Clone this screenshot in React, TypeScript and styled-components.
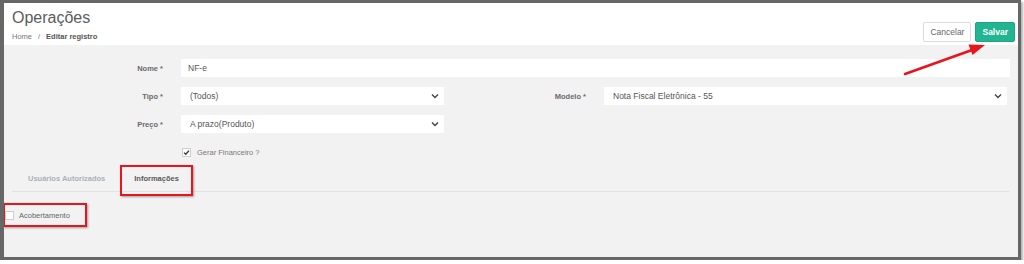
import styled, { createGlobalStyle, css } from "styled-components";

const GlobalStyle = createGlobalStyle`
  html, body {
    margin: 0;
    padding: 0;
    background: #ffffff;
  }
  body {
    font-family: "Liberation Sans", Arial, sans-serif;
  }
`;

const Frame = styled.div`
  width: 1021px;
  height: 260px;
  box-sizing: border-box;
  border-style: solid;
  border-color: #676767;
  border-width: 3px 3px 3px 4px;
  box-shadow: 2px 2px 2px rgba(0, 0, 0, 0.3);
  background: #f2f2f2;
  position: relative;
  overflow: hidden;
`;

const Header = styled.header`
  height: 42px;
  box-sizing: border-box;
  background: #ffffff;
  display: flex;
  align-items: flex-end;
  justify-content: space-between;
  padding: 6px 3px 3px 8px;
`;

const TitleBlock = styled.div`
  display: flex;
  flex-direction: column;
  align-self: stretch;
`;

const Title = styled.h1`
  margin: 0;
  font-size: 16px;
  line-height: 18px;
  font-weight: normal;
  color: #5c5c5c;
`;

const Breadcrumb = styled.div`
  margin-top: auto;
  font-size: 7.5px;
  line-height: 10px;
  color: #6d6d6d;
  display: flex;
  gap: 6px;
`;

const Crumb = styled.span<{ $active?: boolean }>`
  font-weight: ${(p) => (p.$active ? "bold" : "normal")};
  color: ${(p) => (p.$active ? "#555" : "#777")};
`;

const Actions = styled.div`
  display: flex;
  gap: 4px;
`;

const Button = styled.button<{ $primary?: boolean }>`
  height: 20px;
  box-sizing: border-box;
  border-radius: 2px;
  font-family: inherit;
  font-size: 8.5px;
  padding: 0 6px;
  cursor: pointer;
  ${(p) =>
    p.$primary
      ? css`
          background: #23b491;
          border: 1px solid #1ea583;
          color: #fff;
          font-weight: bold;
        `
      : css`
          background: #fff;
          border: 1px solid #dcdcdc;
          color: #666;
        `}
`;

const Form = styled.div`
  padding: 14px 8px 0 0;
  display: flex;
  flex-direction: column;
  gap: 10px;
`;

const Row = styled.div`
  display: flex;
  align-items: center;
`;

const Label = styled.label<{ $width: number }>`
  width: ${(p) => p.$width}px;
  flex: none;
  text-align: right;
  font-size: 7.5px;
  font-weight: bold;
  color: #6a6a6a;
  padding-right: 18px;
  box-sizing: content-box;
`;

const Input = styled.div<{ $width?: number }>`
  height: 18px;
  box-sizing: border-box;
  background: #fff;
  display: flex;
  align-items: center;
  padding-left: 7px;
  font-size: 8.5px;
  color: #555;
  ${(p) => (p.$width ? `width: ${p.$width}px; flex: none;` : "flex: 1;")}
`;

const Select = styled(Input)`
  padding: 0 5px 0 9px;
  justify-content: space-between;
`;

const CheckRow = styled.div`
  display: flex;
  align-items: center;
  gap: 6px;
  padding-left: 178px;
  margin-top: 5px;
  font-size: 7.5px;
  color: #7a7a7a;
`;

const Box = styled.span`
  width: 9px;
  height: 9px;
  box-sizing: border-box;
  border: 1px solid #cfcfcf;
  background: #fff;
  display: inline-flex;
  align-items: center;
  justify-content: center;
`;

const redBox = css`
  content: "";
  position: absolute;
  border: 2px solid #e8161c;
  box-shadow: 1px 1px 2px rgba(0, 0, 0, 0.35);
  pointer-events: none;
`;

const Tabs = styled.div`
  margin: 10px 9px 0 8px;
  display: flex;
  border-bottom: 1px solid #e2e2e2;
`;

const Tab = styled.div<{ $active?: boolean; $marked?: boolean }>`
  position: relative;
  height: 24px;
  line-height: 24px;
  padding: 0 ${(p) => (p.$marked ? "12px 0 13px" : "16px")};
  font-size: 7.5px;
  font-weight: bold;
  color: ${(p) => (p.$active ? "#5a5a5a" : "#a9b1bb")};
  ${(p) =>
    p.$marked &&
    css`
      &::after {
        ${redBox};
        left: -1px;
        right: -2px;
        top: -2px;
        bottom: -5px;
      }
    `}
`;

const OptionRow = styled.div`
  position: relative;
  margin: 14px 0 0 1px;
  display: flex;
  align-items: center;
  gap: 5px;
  width: 82px;
  height: 18px;
  font-size: 7.5px;
  color: #666;
  &::after {
    ${redBox};
    left: -2px;
    right: 0;
    top: -3px;
    bottom: -3px;
  }
`;

const Overlay = styled.svg`
  position: absolute;
  left: 0;
  top: 0;
  pointer-events: none;
`;

function Chevron() {
  return (
    <svg width="8" height="6" viewBox="0 0 8 6">
      <polyline points="1,1.5 4,4.5 7,1.5" fill="none" stroke="#444" strokeWidth="1.4" />
    </svg>
  );
}

export default function App() {
  return (
    <>
      <GlobalStyle />
      <Frame>
        <Header>
          <TitleBlock>
            <Title>Operações</Title>
            <Breadcrumb>
              <Crumb>Home</Crumb>
              <Crumb>/</Crumb>
              <Crumb $active>Editar registro</Crumb>
            </Breadcrumb>
          </TitleBlock>
          <Actions>
            <Button>Cancelar</Button>
            <Button $primary>Salvar</Button>
          </Actions>
        </Header>

        <Form>
          <Row>
            <Label $width={159}>Nome *</Label>
            <Input>NF-e</Input>
          </Row>
          <Row>
            <Label $width={159}>Tipo *</Label>
            <Select $width={263}>
              (Todos)
              <Chevron />
            </Select>
            <Label $width={142}>Modelo *</Label>
            <Select $width={403}>
              Nota Fiscal Eletrônica - 55
              <Chevron />
            </Select>
          </Row>
          <Row>
            <Label $width={159}>Preço *</Label>
            <Select $width={263}>
              A prazo(Produto)
              <Chevron />
            </Select>
          </Row>
          <CheckRow>
            <Box>
              <svg width="7" height="7" viewBox="0 0 7 7">
                <polyline points="1,3.6 2.8,5.3 6,1.6" fill="none" stroke="#333" strokeWidth="1.3" />
              </svg>
            </Box>
            Gerar Financeiro ?
          </CheckRow>
        </Form>

        <Tabs>
          <Tab>Usuários Autorizados</Tab>
          <Tab $active $marked>
            Informações
          </Tab>
        </Tabs>

        <OptionRow>
          <Box />
          Acobertamento
        </OptionRow>

        <Overlay width="1014" height="254" viewBox="0 0 1014 254">
          <g transform="translate(-4,-3)">
            <line x1="905" y1="74" x2="972" y2="50" stroke="#e8161c" strokeWidth="2.6" strokeLinecap="round" />
            <polygon points="985,45 972.5,55 968.5,44.5" fill="#e8161c" />
          </g>
        </Overlay>
      </Frame>
    </>
  );
}
